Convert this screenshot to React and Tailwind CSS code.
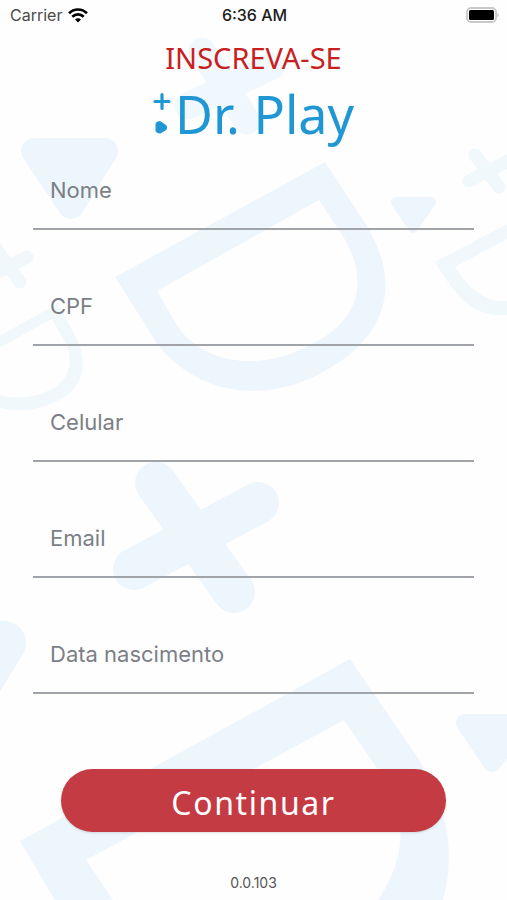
import { useState } from "react";

const fields = [
	{ name: "nome", label: "Nome", type: "text" },
	{ name: "cpf", label: "CPF", type: "text" },
	{ name: "celular", label: "Celular", type: "tel" },
	{ name: "email", label: "Email", type: "email" },
	{ name: "nascimento", label: "Data nascimento", type: "text" },
];

const defaultValues = {
	nome: "",
	cpf: "",
	celular: "",
	email: "",
	nascimento: "",
};

// pale shapes behind the form
const Backdrop = () => (
	<svg
		className="absolute inset-0 -z-10 h-full w-full"
		viewBox="0 0 507 900"
		preserveAspectRatio="xMidYMid slice"
		aria-hidden="true"
	>
		{/* letters */}
		<g fill="#edf6fd" fillRule="evenodd">
			<path d="M115 277 L325 162 L367 226 C402 284 386 335 330 368 C270 405 200 397 158 345 Z M157 291 L319 200 L344 238 C371 285 356 322 312 344 C262 372 206 365 178 327 Z" />
			<path d="M20 841 L350 659 L418 758 C450 810 455 855 443 900 L410 960 L90 960 Z M86 860 L344 720 L385 780 C408 820 405 860 378 900 L340 940 L140 940 Z" />
			<path fill="#f0f8fc" d="M435 262 L520 217 V315 H497 C470 313 455 295 435 262 Z M455 267 L520 232 V301 H500 C480 299 467 285 455 267 Z" />
			<path fill="#f0f8fc" d="M-10 341 L57 304 L75 335 C90 365 83 390 55 402 C35 412 10 413 -10 404 Z M-10 353 L52 319 L64 340 C75 360 70 380 50 390 C30 400 10 399 -10 393 Z" />
		</g>

		{/* triangles */}
		<g fill="#edf6fd" stroke="#edf6fd" strokeLinejoin="round">
			<path strokeWidth="26" d="M34 151 H105 L71 206 Z" />
			<path strokeWidth="10" d="M396 202 H431 L413 228 Z" />
			<path strokeWidth="18" d="M465 723 H525 L492 763 Z" />
			<path strokeWidth="44" d="M4 643 H-60 L-28 695 Z" />
		</g>

		{/* crosses */}
		<g stroke="#edf6fd" strokeLinecap="round" fill="none">
			<path strokeWidth="42" d="M156 483 L234 592 M258 503 L134 569" />
			<path stroke="#f1f8fd" strokeWidth="27" d="M202 51 L247 121 M272 66 L188 106" />
			<path stroke="#f0f8fc" strokeWidth="13" d="M475 155 L499 187 M510 160 L469 181" />
			<path stroke="#f0f8fc" strokeWidth="13" d="M-5 247 L20 282 M27 257 L-10 276" />
		</g>
	</svg>
);

const StatusBar = () => (
	<div className="grid h-[30px] grid-cols-3 items-center pr-2 pl-2.5 text-base">
		<div className="flex items-center gap-1.5 text-[#4b4b4b]">
			<span>Carrier</span>
			<svg width="20" height="15" viewBox="0 0 20 15" aria-label="Wi-Fi">
				<g fill="none" stroke="#000" strokeWidth="2.7">
					<path d="M1 5.3 C6 0.2 14 0.2 19 5.3" />
					<path d="M4.3 8.8 C7.6 5.6 12.4 5.6 15.7 8.8" />
				</g>
				<path d="M10 14.5 L7 11.5 C8.8 9.9 11.2 9.9 13 11.5 Z" />
			</svg>
		</div>
		<span className="text-center font-medium text-[#1c1c1c]">6:36 AM</span>
		<svg className="justify-self-end" width="33" height="16" viewBox="0 0 33 16" aria-label="Battery">
			<rect x="1" y="1" width="29" height="14" rx="4" fill="#fff" stroke="#c8c8c8" strokeWidth="1.8" />
			<rect x="3" y="3" width="25" height="10" rx="1.5" />
			<path d="M31.5 6 C33 6.6 33 9.4 31.5 10 Z" fill="#b5b5b5" />
		</svg>
	</div>
);

const Logo = () => (
	<div className="flex items-center justify-center gap-1 text-[#1f97d4]">
		<svg width="18" height="44" viewBox="0 0 18 44" aria-hidden="true">
			<path d="M9 2.5 V16.5 M2 9.5 H16" stroke="currentColor" strokeWidth="3.2" strokeLinecap="round" />
			<path
				d="M5 32 L6.5 31.5 L11.5 35 L11.5 36 L6.5 39 L5 38.5 Z"
				fill="currentColor"
				stroke="currentColor"
				strokeWidth="5"
				strokeLinejoin="round"
			/>
		</svg>
		<span className="font-['Noto_Sans',sans-serif] text-[52px] leading-[60px]">Dr. Play</span>
	</div>
);

const App = () => {
	const [values, setValues] = useState(defaultValues);

	const onChange = (event) => {
		setValues({ ...values, [event.target.name]: event.target.value });
	};

	const handleSubmit = (event) => {
		event.preventDefault();
	};

	return (
		<div className="relative isolate flex min-h-screen flex-col overflow-hidden bg-[#fefefe] font-[Inter,sans-serif]">
			<Backdrop />
			<StatusBar />

			<header className="flex flex-col pt-3">
				<h1 className="text-center font-['Noto_Sans',sans-serif] text-[29px] leading-8 text-[#c8201f]">
					INSCREVA-SE
				</h1>
				<div className="pt-2.5">
					<Logo />
				</div>
			</header>

			<form onSubmit={handleSubmit} className="flex flex-col pt-1.5">
				<div className="flex flex-col gap-9 px-[33px]">
					{fields.map((field) => (
						<div key={field.name} className="grid items-center text-[22px]">
							{/* label sits in the same cell as the input until something is typed */}
							<label
								htmlFor={field.name}
								className={
									values[field.name]
										? "invisible col-start-1 row-start-1 px-[17px]"
										: "col-start-1 row-start-1 px-[17px] text-[#7b7f86]"
								}
							>
								{field.label}
							</label>
							<input
								id={field.name}
								name={field.name}
								type={field.type}
								value={values[field.name]}
								onChange={onChange}
								className="col-start-1 row-start-1 h-20 w-full border-b-2 border-[#a0a4a8] bg-transparent px-[17px] text-gray-800 outline-none"
							/>
						</div>
					))}
				</div>

				<div className="px-[61px] pt-[75px]">
					<button
						type="submit"
						className="h-[63px] w-full rounded-full bg-[#c53b43] pt-1 font-['Noto_Sans',sans-serif] text-[32px] tracking-wider text-white shadow"
					>
						Continuar
					</button>
				</div>
			</form>

			<p className="pt-[41px] text-center text-sm text-[#555]">0.0.103</p>
		</div>
	);
};

export default App;
